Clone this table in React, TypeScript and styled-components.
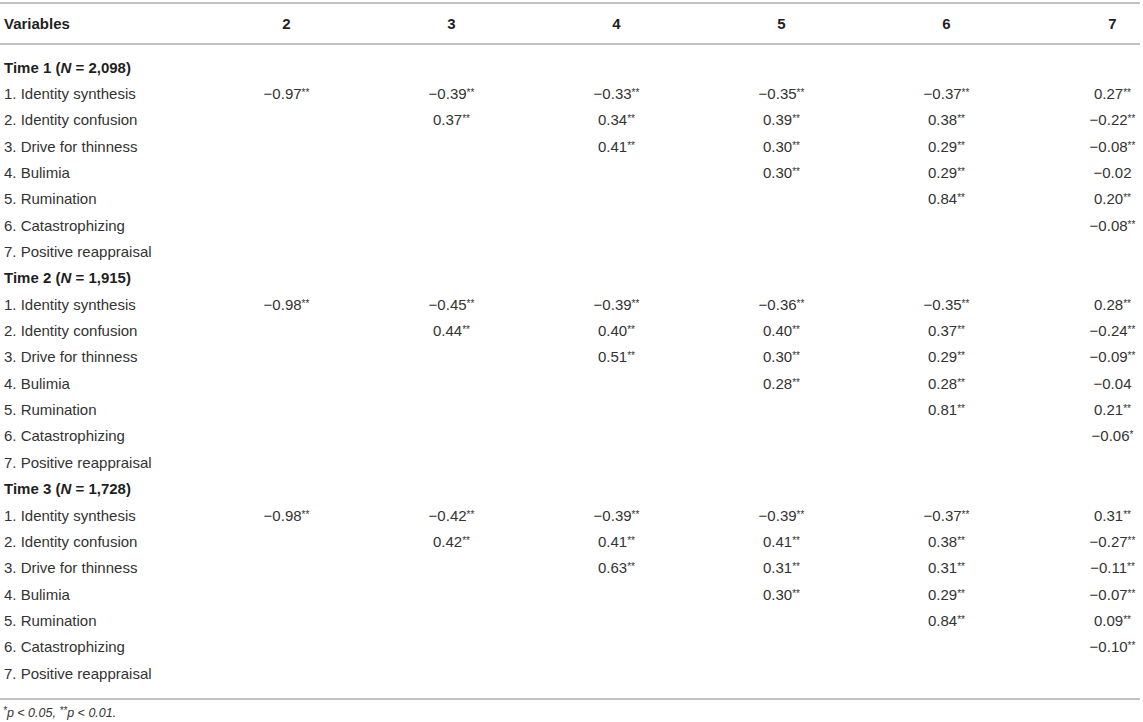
import styled, { createGlobalStyle } from "styled-components";

const GlobalStyle = createGlobalStyle`
  body {
    margin: 0;
    background: #ffffff;
    font-family: "Liberation Sans", Arial, sans-serif;
  }
`;

type Group = {
  time: number;
  n: string;
  rows: string[][];
};

const labels = [
  "1. Identity synthesis",
  "2. Identity confusion",
  "3. Drive for thinness",
  "4. Bulimia",
  "5. Rumination",
  "6. Catastrophizing",
  "7. Positive reappraisal",
];

const groups: Group[] = [
  {
    time: 1,
    n: "2,098",
    rows: [
      ["−0.97**", "−0.39**", "−0.33**", "−0.35**", "−0.37**", "0.27**"],
      ["0.37**", "0.34**", "0.39**", "0.38**", "−0.22**"],
      ["0.41**", "0.30**", "0.29**", "−0.08**"],
      ["0.30**", "0.29**", "−0.02"],
      ["0.84**", "0.20**"],
      ["−0.08**"],
      [],
    ],
  },
  {
    time: 2,
    n: "1,915",
    rows: [
      ["−0.98**", "−0.45**", "−0.39**", "−0.36**", "−0.35**", "0.28**"],
      ["0.44**", "0.40**", "0.40**", "0.37**", "−0.24**"],
      ["0.51**", "0.30**", "0.29**", "−0.09**"],
      ["0.28**", "0.28**", "−0.04"],
      ["0.81**", "0.21**"],
      ["−0.06*"],
      [],
    ],
  },
  {
    time: 3,
    n: "1,728",
    rows: [
      ["−0.98**", "−0.42**", "−0.39**", "−0.39**", "−0.37**", "0.31**"],
      ["0.42**", "0.41**", "0.41**", "0.38**", "−0.27**"],
      ["0.63**", "0.31**", "0.31**", "−0.11**"],
      ["0.30**", "0.29**", "−0.07**"],
      ["0.84**", "0.09**"],
      ["−0.10**"],
      [],
    ],
  },
];

const Page = styled.div`
  padding: 2px 3px 0 0;
  color: #333333;
`;

const Table = styled.div`
  display: flex;
  flex-direction: column;
`;

const Row = styled.div<{ $head?: boolean }>`
  display: grid;
  grid-template-columns: 204px repeat(5, 165px) 1fr;
  align-items: center;
  height: ${(p) => (p.$head ? "39px" : "26.35px")};
  font-size: 15px;
  ${(p) =>
    p.$head &&
    `
    border-top: 2px solid #c2c2c2;
    border-bottom: 2px solid #c2c2c2;
    font-weight: bold;
    color: #1f1f1f;
  `}
`;

const Label = styled.div<{ $bold?: boolean }>`
  padding-left: 4px;
  white-space: nowrap;
  font-weight: ${(p) => (p.$bold ? "bold" : "normal")};
  color: ${(p) => (p.$bold ? "#1f1f1f" : "#333333")};
`;

const Cell = styled.div<{ $last?: boolean }>`
  text-align: center;
  white-space: nowrap;
  padding-left: ${(p) => (p.$last ? "56px" : "0")};
`;

const Stars = styled.sup`
  font-size: 10px;
  line-height: 0;
  vertical-align: 3px;
`;

const Body = styled.div`
  padding: 9px 0 12px;
  border-bottom: 2px solid #c2c2c2;
`;

const Footnote = styled.div`
  padding: 6px 0 0 3px;
  font-size: 12.5px;
  font-style: italic;
  color: #333333;
`;

const Value = ({ text }: { text: string }) => {
  const m = text.match(/^([^*]*)(\**)$/);
  const num = m ? m[1] : text;
  const stars = m ? m[2] : "";
  return (
    <>
      {num}
      {stars && <Stars>{stars}</Stars>}
    </>
  );
};

const App = () => {
  const cols = [2, 3, 4, 5, 6, 7];
  return (
    <Page>
      <GlobalStyle />
      <Table>
        <Row $head>
          <Label $bold>Variables</Label>
          {cols.map((c, i) => (
            <Cell key={c} $last={i === cols.length - 1}>
              {c}
            </Cell>
          ))}
        </Row>
        <Body>
          {groups.map((g) => (
            <div key={g.time}>
              <Row>
                <Label $bold>
                  Time {g.time} (<i>N</i> = {g.n})
                </Label>
              </Row>
              {labels.map((label, r) => {
                const vals = g.rows[r];
                const offset = 6 - vals.length;
                return (
                  <Row key={label}>
                    <Label>{label}</Label>
                    {cols.map((c, i) => (
                      <Cell key={c} $last={i === cols.length - 1}>
                        {i >= offset && <Value text={vals[i - offset]} />}
                      </Cell>
                    ))}
                  </Row>
                );
              })}
            </div>
          ))}
        </Body>
      </Table>
      <Footnote>
        <Stars>*</Stars>p &lt; 0.05, <Stars>**</Stars>p &lt; 0.01.
      </Footnote>
    </Page>
  );
};

export default App;
